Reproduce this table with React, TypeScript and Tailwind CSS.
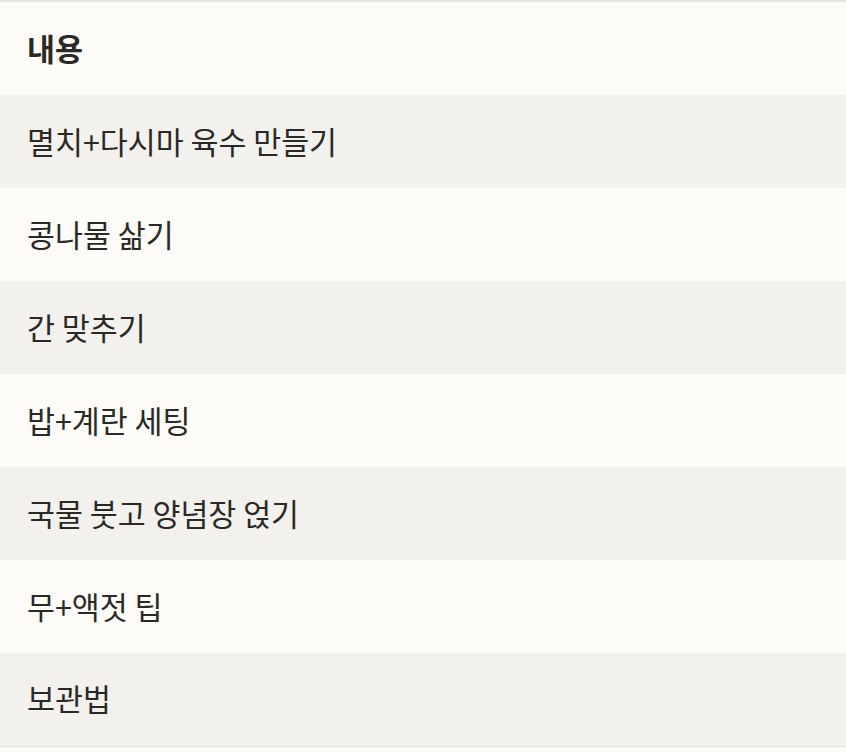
const rows = [
  '멸치+다시마 육수 만들기',
  '콩나물 삶기',
  '간 맞추기',
  '밥+계란 세팅',
  '국물 붓고 양념장 얹기',
  '무+액젓 팁',
  '보관법',
];

export default function App() {
  return (
    <div
      className="min-h-screen bg-[#fcfbf8] text-[#2a2925]"
      style={{ fontFamily: '"Noto Sans CJK KR", "Noto Sans", sans-serif' }}
    >
      <table className="w-full border-collapse text-[30.4px]">
        <thead>
          <tr className="h-[94px] border-t-2 border-[#e6e3dd] bg-[#fcfbf8]">
            <th className="px-[27px] text-left font-semibold">내용</th>
          </tr>
        </thead>
        <tbody>
          {rows.map((r, i) => (
            <tr
              key={r}
              className={`h-[93px] ${i % 2 === 0 ? 'bg-[#f2f1ed]' : 'bg-[#fcfbf8]'} ${
                i === rows.length - 1 ? 'border-b border-[#e6e3dd]' : ''
              }`}
            >
              <td className="px-[27px]">{r}</td>
            </tr>
          ))}
        </tbody>
      </table>
    </div>
  );
}
